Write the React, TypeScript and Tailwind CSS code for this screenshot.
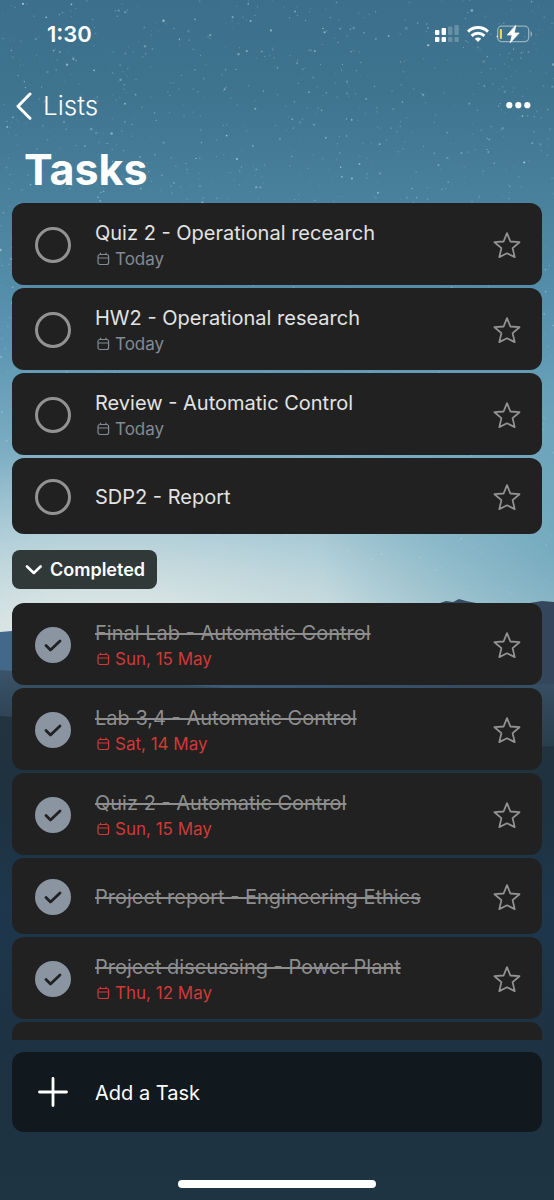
import React, { useState } from 'react';

type Task = {
  id: string;
  title: string;
  due?: string;
};

const openTasks: Task[] = [
  { id: 'quiz-or', title: 'Quiz 2 - Operational recearch', due: 'Today' },
  { id: 'hw-or', title: 'HW2 - Operational research', due: 'Today' },
  { id: 'review-ac', title: 'Review - Automatic Control', due: 'Today' },
  { id: 'sdp-report', title: 'SDP2 - Report' },
];

const completedTasks: Task[] = [
  { id: 'final-lab', title: 'Final Lab - Automatic Control', due: 'Sun, 15 May' },
  { id: 'lab-34', title: 'Lab 3,4 - Automatic Control', due: 'Sat, 14 May' },
  { id: 'quiz-ac', title: 'Quiz 2 - Automatic Control', due: 'Sun, 15 May' },
  { id: 'ethics', title: 'Project report - Engineering Ethics' },
  { id: 'power', title: 'Project discussing - Power Plant', due: 'Thu, 12 May' },
];

// Small seeded generator so the sky looks the same on every render
const makeStars = (count: number) => {
  let seed = 7;
  const next = () => {
    seed = (seed * 16807) % 2147483647;
    return seed / 2147483647;
  };
  return Array.from({ length: count }, () => {
    const y = next() * 600;
    return {
      x: next() * 554,
      y,
      r: 0.5 + next() * next() * 0.9,
      opacity: (0.15 + next() * next() * 0.75) * (1 - y / 900),
    };
  });
};

const stars = makeStars(2000);

const NightSky = () => (
  <svg
    className="absolute inset-0 -z-10 h-full w-full"
    viewBox="0 0 554 1200"
    preserveAspectRatio="none"
    aria-hidden="true"
  >
    <defs>
      <linearGradient id="sky" x1="0" y1="0" x2="0" y2="620" gradientUnits="userSpaceOnUse">
        <stop offset="0" stopColor="#3b6f8b" />
        <stop offset="0.15" stopColor="#3f748f" />
        <stop offset="0.32" stopColor="#49809c" />
        <stop offset="0.55" stopColor="#5b95b1" />
        <stop offset="0.75" stopColor="#80b0c5" />
        <stop offset="0.88" stopColor="#a3c7d4" />
        <stop offset="1" stopColor="#c5dadd" />
      </linearGradient>
      <radialGradient id="glow" cx="0" cy="0" r="1" gradientUnits="userSpaceOnUse" gradientTransform="translate(110 660) scale(380 220)">
        <stop offset="0" stopColor="#f0efe8" stopOpacity="0.95" />
        <stop offset="0.4" stopColor="#e2e9e7" stopOpacity="0.5" />
        <stop offset="1" stopColor="#c5dadd" stopOpacity="0" />
      </radialGradient>
      <radialGradient id="dusk" cx="0" cy="0" r="1" gradientUnits="userSpaceOnUse" gradientTransform="translate(600 540) scale(280 260)">
        <stop offset="0" stopColor="#5f9db5" stopOpacity="0.8" />
        <stop offset="1" stopColor="#5f9db5" stopOpacity="0" />
      </radialGradient>
      <linearGradient id="ridge" x1="0" y1="0" x2="554" y2="0" gradientUnits="userSpaceOnUse">
        <stop offset="0" stopColor="#42698a" />
        <stop offset="1" stopColor="#34465b" />
      </linearGradient>
      <linearGradient id="haze" x1="0" y1="660" x2="0" y2="760" gradientUnits="userSpaceOnUse">
        <stop offset="0" stopColor="#3d5870" />
        <stop offset="0.4" stopColor="#33495c" />
        <stop offset="1" stopColor="#263b49" />
      </linearGradient>
      <linearGradient id="ground" x1="0" y1="710" x2="0" y2="1200" gradientUnits="userSpaceOnUse">
        <stop offset="0" stopColor="#22343f" />
        <stop offset="0.18" stopColor="#1e323f" />
        <stop offset="0.4" stopColor="#1e374d" />
        <stop offset="0.7" stopColor="#1d3242" />
        <stop offset="1" stopColor="#1f3442" />
      </linearGradient>
    </defs>
    <rect width="554" height="640" fill="url(#sky)" />
    <rect width="554" height="640" fill="url(#glow)" />
    <rect width="554" height="640" fill="url(#dusk)" />
    {stars.map((star, i) => (
      <circle key={i} cx={star.x} cy={star.y} r={star.r} fill="#cfe6f2" opacity={star.opacity} />
    ))}
    <path
      d="M0 632 12 631 200 640 380 612 440 603 446 601 453 602 459 599 466 601 476 603 500 608 530 603 542 601 554 602V800H0Z"
      fill="url(#ridge)"
    />
    <path d="M0 670 80 676 300 694 554 684V1200H0Z" fill="url(#haze)" />
    <path d="M0 716 80 722 300 760 554 746V1200H0Z" fill="url(#ground)" />
  </svg>
);

const SignalIcon = () => (
  <svg className="h-[18px] w-6" viewBox="0 0 24 18" fill="white" aria-hidden="true">
    <rect x="0" y="5" width="4.400" height="5" rx="1" />
    <rect x="0" y="12" width="4.400" height="5" rx="1" />
    <rect x="6.600" y="3" width="4.400" height="7" rx="1" />
    <rect x="6.600" y="12" width="4.400" height="5" rx="1" />
    <g opacity="0.22">
      <rect x="13" y="1.500" width="4.400" height="8.500" rx="1" />
      <rect x="13" y="12" width="4.400" height="5" rx="1" />
      <rect x="19.400" y="0" width="4.400" height="10" rx="1" />
      <rect x="19.400" y="12" width="4.400" height="5" rx="1" />
    </g>
  </svg>
);

const WifiIcon = () => (
  <svg className="h-4 w-[22px]" viewBox="0 0 22 16" fill="none" stroke="white" strokeWidth="3" aria-hidden="true">
    <path d="M1 5.600a14.500 14.500 0 0 1 20 0" />
    <path d="M4.600 9.800a9.300 9.300 0 0 1 12.800 0" />
    <path d="M11 16 7.800 12.800a4.600 4.600 0 0 1 6.400 0Z" fill="white" stroke="none" />
  </svg>
);

const BatteryIcon = () => (
  <svg className="h-[18px] w-9" viewBox="0 0 36 18" aria-hidden="true">
    <rect x="0.700" y="1.200" width="31" height="15.400" rx="4" fill="none" stroke="white" strokeOpacity="0.45" strokeWidth="1.300" />
    <path d="M33.600 6.200c1.800.7 1.800 4.900 0 5.600Z" fill="white" fillOpacity="0.5" />
    <rect x="2.800" y="4" width="2.200" height="10" rx="0.800" fill="#f2d34e" />
    <path d="M18.800.4 10.200 10h5L13.200 17.800 22.200 8H17.200Z" fill="white" stroke="white" strokeWidth="0.800" strokeLinejoin="round" />
  </svg>
);

const CalendarIcon = () => (
  <svg className="h-4 w-4" viewBox="0 0 16 16" fill="none" stroke="currentColor" strokeWidth="1.200" aria-hidden="true">
    <rect x="3" y="3.500" width="10.600" height="10" rx="2" />
    <path d="M3 7h10.600M5.500 1.800v1.700M11 1.800v1.700" />
  </svg>
);

const StarIcon = ({ filled }: { filled: boolean }) => (
  <svg
    className="h-7 w-7"
    viewBox="0 0 28 28"
    fill={filled ? 'currentColor' : 'none'}
    stroke="currentColor"
    strokeWidth="1.800"
    strokeLinejoin="round"
    aria-hidden="true"
  >
    <path d="m14 2.200 3.400 8.300 9.100.7-6.900 5.900 2.100 9-7.700-3.800-7.700 3.800 2.100-9-6.900-5.900 9.100-.7Z" />
  </svg>
);

const TaskRow = ({ task, completed = false }: { task: Task; completed?: boolean }) => {
  const [done, setDone] = useState(completed);
  const [starred, setStarred] = useState(false);

  return (
    <li className={`flex items-center rounded-xl bg-[#212121] pt-0.5 pl-[23px] pr-[21px] ${task.due ? 'h-[82px]' : 'h-[76px]'}`}>
      <span className="mr-6 grid h-9 w-9 shrink-0">
        <input
          id={task.id}
          type="checkbox"
          checked={done}
          onChange={() => setDone(!done)}
          className="col-start-1 row-start-1 h-9 w-9 appearance-none rounded-full border-3 border-[#929292] checked:border-0 checked:bg-[#8a95a1]"
        />
        {done && (
          <svg
            className="pointer-events-none col-start-1 row-start-1 h-9 w-9"
            viewBox="0 0 36 36"
            fill="none"
            stroke="#212121"
            strokeWidth="2.800"
            strokeLinecap="round"
            strokeLinejoin="round"
            aria-hidden="true"
          >
            <path d="m11 18.500 4.500 4.500 9.500-9" />
          </svg>
        )}
      </span>
      <div className="min-w-0 flex-1">
        <label
          htmlFor={task.id}
          className={`block truncate text-xl leading-7 ${done ? 'text-[#8e8e8e] line-through' : 'text-[#e3e3e3]'}`}
        >
          {task.title}
        </label>
        {task.due && (
          <p className={`flex items-center gap-1 text-[17px] leading-6 ${done ? 'text-[#cf3a38]' : 'text-[#818a96]'}`}>
            <CalendarIcon />
            {task.due}
          </p>
        )}
      </div>
      <button
        type="button"
        aria-label={`Star ${task.title}`}
        aria-pressed={starred}
        onClick={() => setStarred(!starred)}
        className="text-[#929292]"
      >
        <StarIcon filled={starred} />
      </button>
    </li>
  );
};

const App = () => {
  const [showCompleted, setShowCompleted] = useState(true);

  return (
    <div className="relative isolate flex h-screen flex-col overflow-hidden px-3 font-['Inter','Liberation_Sans',sans-serif] text-white">
      <NightSky />

      <div className="flex h-[68px] shrink-0 items-center justify-between pl-[35px] pr-[9px]">
        <span className="text-[22px] leading-7 font-semibold">1:30</span>
        <div className="flex items-center gap-2">
          <SignalIcon />
          <WifiIcon />
          <BatteryIcon />
        </div>
      </div>

      <header className="shrink-0">
        <div className="flex h-[76px] items-center justify-between pl-1 pr-[11px]">
          <a href="#lists" className="flex items-center gap-[11px] text-[26px] leading-8 font-light">
            <svg
              className="h-7 w-4"
              viewBox="0 0 16 28"
              fill="none"
              stroke="currentColor"
              strokeWidth="3"
              strokeLinecap="round"
              strokeLinejoin="round"
              aria-hidden="true"
            >
              <path d="M14 2 2 14.300 14 26.300" />
            </svg>
            Lists
          </a>
          <button type="button" aria-label="More options">
            <svg className="h-2 w-[25px]" viewBox="0 0 25 8" fill="currentColor" aria-hidden="true">
              <circle cx="3.300" cy="3.200" r="3.100" />
              <circle cx="12.300" cy="3.200" r="3.100" />
              <circle cx="21.300" cy="3.200" r="3.100" />
            </svg>
          </button>
        </div>
        <h1 className="pb-2 pl-3 text-[43px] leading-[51px] font-bold">Tasks</h1>
      </header>

      <main className="min-h-0 flex-1 overflow-hidden">
        <ul className="flex flex-col gap-[3px]">
          {openTasks.map((task) => (
            <TaskRow key={task.id} task={task} />
          ))}
        </ul>

        <button
          type="button"
          aria-expanded={showCompleted}
          onClick={() => setShowCompleted(!showCompleted)}
          className="mt-4 mb-[14px] flex h-[39px] items-center gap-2 rounded-lg bg-[#303838] px-3 text-lg font-semibold"
        >
          <svg
            className={`h-4 w-[18px] ${showCompleted ? '' : '-rotate-90'}`}
            viewBox="0 0 18 16"
            fill="none"
            stroke="currentColor"
            strokeWidth="2.600"
            strokeLinecap="round"
            strokeLinejoin="round"
            aria-hidden="true"
          >
            <path d="m3 4.500 6.800 6.500 6.800-6.500" />
          </svg>
          Completed
        </button>

        {showCompleted && (
          <ul className="flex flex-col gap-[3px]">
            {completedTasks.map((task) => (
              <TaskRow key={task.id} task={task} completed />
            ))}
            <li className="h-20 rounded-xl bg-[#212121]" />
          </ul>
        )}
      </main>

      <footer className="shrink-0 pt-3">
        <button
          type="button"
          className="flex h-20 w-full items-center gap-[27px] rounded-xl bg-[#11191e] pl-[26px] text-left text-xl"
        >
          <svg
            className="h-[30px] w-[30px]"
            viewBox="0 0 30 30"
            fill="none"
            stroke="currentColor"
            strokeWidth="2.800"
            strokeLinecap="round"
            aria-hidden="true"
          >
            <path d="M15 1.500v27M1.500 15h27" />
          </svg>
          <span className="pt-0.5">Add a Task</span>
        </button>
        <div className="mx-auto mt-12 mb-3 h-2 w-[198px] rounded-full bg-white" />
      </footer>
    </div>
  );
};

export default App;
